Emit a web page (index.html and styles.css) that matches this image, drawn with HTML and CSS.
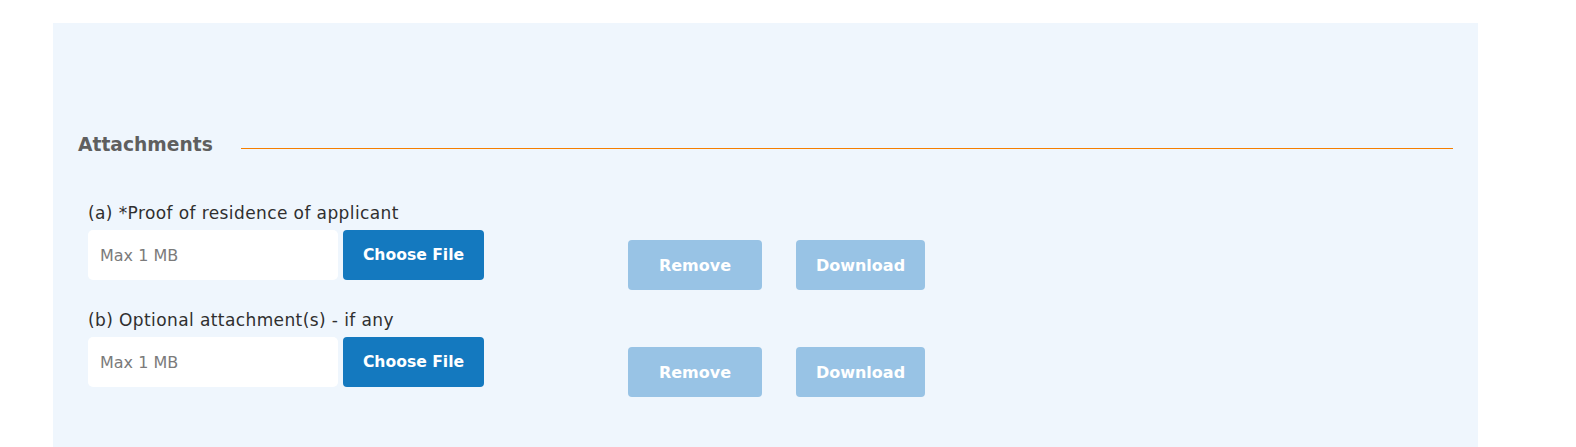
FILE: index.html
```
<!DOCTYPE html>
<html lang="en">
<head>
<meta charset="utf-8">
<title>Attachments</title>
<link rel="stylesheet" href="styles.css">
</head>
<body>
<div class="panel">
  <div class="section-head">
    <h2 class="section-title">Attachments</h2>
    <div class="section-line"></div>
  </div>
  <div class="att-row">
    <div class="att-main">
      <label class="att-label">(a) *Proof of residence of applicant</label>
      <div class="file-group">
        <input class="file-input" type="text" placeholder="Max 1 MB">
        <button class="btn btn-primary">Choose File</button>
      </div>
    </div>
    <div class="att-actions">
      <button class="btn btn-light btn-remove">Remove</button>
      <button class="btn btn-light btn-download">Download</button>
    </div>
  </div>
  <div class="att-row">
    <div class="att-main">
      <label class="att-label">(b) Optional attachment(s) - if any</label>
      <div class="file-group">
        <input class="file-input" type="text" placeholder="Max 1 MB">
        <button class="btn btn-primary">Choose File</button>
      </div>
    </div>
    <div class="att-actions">
      <button class="btn btn-light btn-remove">Remove</button>
      <button class="btn btn-light btn-download">Download</button>
    </div>
  </div>
</div>
</body>
</html>
```
FILE: styles.css
```
* { box-sizing: border-box; }
html, body { margin: 0; padding: 0; background: #ffffff; }
body {
  font-family: "DejaVu Sans", "Noto Sans", sans-serif;
  color: #333333;
  height: 447px;
  overflow: hidden;
}
.panel {
  margin: 23px 0 0 53px;
  width: 1425px;
  height: 480px;
  background: #eff6fd;
  padding: 109px 25px 0 25px;
}
.section-head {
  display: flex;
  align-items: flex-start;
  height: 26px;
}
.section-title {
  margin: 0;
  font-size: 18.7px;
  line-height: 26px;
  font-weight: 700;
  color: #5f5f5f;
}
.section-line {
  flex: 1;
  height: 1px;
  background: #f57f00;
  margin-left: 28px;
  margin-top: 16px;
}
.att-row {
  display: flex;
  align-items: flex-start;
  margin-top: 43px;
  padding-left: 10px;
}
.att-row + .att-row { margin-top: 18px; }
.att-main {
  display: flex;
  flex-direction: column;
}
.att-label {
  font-size: 17px;
  line-height: 24px;
  letter-spacing: 0.4px;
  color: #2f2f2f;
}
.file-group {
  display: flex;
  gap: 5px;
  margin-top: 5px;
}
.file-input {
  width: 250px;
  height: 50px;
  border: none;
  border-radius: 5px;
  background: #ffffff;
  padding: 0 12px;
  font-family: inherit;
  font-size: 16px;
  color: #333;
  outline: none;
}
.file-input::placeholder { color: #7b7b7b; }
.btn {
  height: 50px;
  border: none;
  border-radius: 4px;
  font-family: inherit;
  font-size: 16px;
  font-weight: 700;
  color: #ffffff;
  cursor: pointer;
}
.btn-primary {
  width: 141px;
  background: #1479bf;
  font-size: 15.6px;
}
.att-actions {
  display: flex;
  gap: 34px;
  margin-left: 144px;
  margin-top: 39px;
}
.btn-light { background: #98c3e5; }
.btn-remove { width: 134px; }
.btn-download { width: 129px; }
```
